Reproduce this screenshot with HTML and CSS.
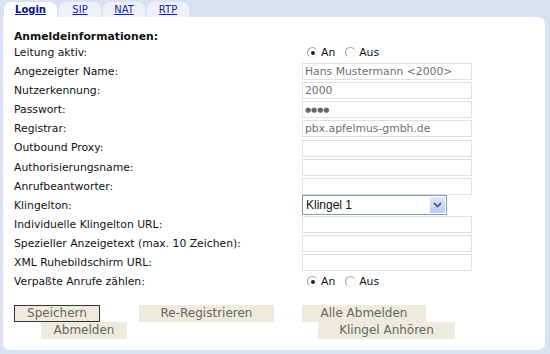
FILE: index.html
```html
<!DOCTYPE html>
<html lang="de">
<head>
<meta charset="utf-8">
<title>Login</title>
<link rel="stylesheet" href="styles.css">
</head>
<body>
<div class="tabs">
  <a class="tab active" href="#">Login</a>
  <a class="tab" href="#">SIP</a>
  <a class="tab" href="#">NAT</a>
  <a class="tab" href="#">RTP</a>
</div>
<div class="panel">
  <div class="heading">Anmeldeinformationen:</div>
  <div class="form">
    <div class="label">Leitung aktiv:</div>
    <div class="field radios"><label><span class="radio on"></span>An</label><label><span class="radio"></span>Aus</label></div>

    <div class="label">Angezeigter Name:</div>
    <div class="field"><input class="text" type="text" value="Hans Mustermann &lt;2000&gt;"></div>

    <div class="label">Nutzerkennung:</div>
    <div class="field"><input class="text" type="text" value="2000"></div>

    <div class="label">Passwort:</div>
    <div class="field"><input class="text pw" type="text" value="●●●●"></div>

    <div class="label">Registrar:</div>
    <div class="field"><input class="text" type="text" value="pbx.apfelmus-gmbh.de"></div>

    <div class="label">Outbound Proxy:</div>
    <div class="field"><input class="text" type="text" value=""></div>

    <div class="label">Authorisierungsname:</div>
    <div class="field"><input class="text" type="text" value=""></div>

    <div class="label">Anrufbeantworter:</div>
    <div class="field"><input class="text" type="text" value=""></div>

    <div class="label">Klingelton:</div>
    <div class="field"><div class="select"><span class="select-value">Klingel 1</span><span class="select-arrow"><svg width="9" height="6" viewBox="0 0 9 6"><path d="M1 1 L4.5 4.5 L8 1" fill="none" stroke="#4d6185" stroke-width="1.8"/></svg></span></div></div>

    <div class="label">Individuelle Klingelton URL:</div>
    <div class="field"><input class="text" type="text" value=""></div>

    <div class="label">Spezieller Anzeigetext (max. 10 Zeichen):</div>
    <div class="field"><input class="text" type="text" value=""></div>

    <div class="label">XML Ruhebildschirm URL:</div>
    <div class="field"><input class="text" type="text" value=""></div>

    <div class="label">Verpaßte Anrufe zählen:</div>
    <div class="field radios"><label><span class="radio on"></span>An</label><label><span class="radio"></span>Aus</label></div>
  </div>
  <div class="buttons">
    <div class="brow">
      <button class="btn b-save">Speichern</button>
      <button class="btn b-rereg">Re-Registrieren</button>
      <button class="btn b-all">Alle Abmelden</button>
    </div>
    <div class="brow">
      <button class="btn b-logout">Abmelden</button>
      <button class="btn b-ring">Klingel Anhören</button>
    </div>
  </div>
</div>
</body>
</html>
```

FILE: styles.css
```css
html, body {
  margin: 0;
  padding: 0;
}
body {
  width: 550px;
  height: 354px;
  background: #dae1f4;
  font-family: "DejaVu Sans", Verdana, sans-serif;
  font-size: 10.8px;
  color: #111;
  overflow: hidden;
}
.tabs {
  display: flex;
  height: 17px;
  padding-left: 4px;
  gap: 2px;
  align-items: flex-end;
}
.tab {
  display: block;
  height: 15px;
  line-height: 15px;
  padding: 0;
  text-align: center;
  background: #eef1f9;
  border-radius: 7px 7px 0 0;
  color: #1d22a8;
  font-size: 10px;
  text-decoration: underline;
  width: 42px;
}
.tab.active {
  background: #fff;
  color: #0c0c7a;
  font-weight: bold;
  width: 53px;
}
.panel {
  margin-left: 3px;
  width: 542px;
  height: 333px;
  background: #fff;
  border-radius: 0 7px 7px 7px;
  box-sizing: border-box;
  padding: 13px 0 0 11px;
}
.heading {
  font-weight: bold;
  height: 14px;
  line-height: 14px;
  font-size: 10.8px;
}
.form {
  display: grid;
  grid-template-columns: 288px 170px;
  grid-auto-rows: 19.1px;
  margin-top: -1px;
}
.label {
  line-height: 19px;
  white-space: nowrap;
}
.field {
  display: flex;
  align-items: center;
}
.text {
  box-sizing: border-box;
  width: 170px;
  height: 17px;
  border: 1px solid #e0e0e0;
  padding: 0 2px;
  margin: 0;
  font-family: "DejaVu Sans", Verdana, sans-serif;
  font-size: 10.8px;
  color: #6e6e6e;
  background: #fff;
  outline: none;
}
.pw {
  font-size: 7px;
  color: #666;
}
.radios {
  padding-left: 5px;
  gap: 10px;
}
.radios label {
  display: flex;
  align-items: center;
  gap: 3px;
}
.radio {
  box-sizing: border-box;
  width: 11px;
  height: 11px;
  border-radius: 50%;
  border: 1px solid #a0a0a0;
  border-right-color: #eee;
  border-bottom-color: #eee;
  background: #fff;
  display: flex;
  align-items: center;
  justify-content: center;
}
.radio.on::after {
  content: "";
  width: 4px;
  height: 4px;
  border-radius: 50%;
  background: #222;
}
.field .select {
  position: relative;
  box-sizing: border-box;
  width: 145px;
  height: 20px;
  border: 1px solid #7f9db9;
  background: #fff;
  display: flex;
  align-items: center;
}
.select-value {
  font-family: "Liberation Sans", Arial, sans-serif;
  font-size: 12px;
  color: #111;
  padding-left: 3px;
}
.select-arrow {
  position: absolute;
  right: 1px;
  top: 1px;
  width: 15px;
  height: 16px;
  background: linear-gradient(#dfe8fb, #b9cbf3);
  border-radius: 1px;
  display: flex;
  align-items: center;
  justify-content: center;
}
.buttons {
  margin-top: 14px;
}
.brow {
  display: flex;
  height: 17px;
}
.btn {
  box-sizing: border-box;
  height: 17px;
  border: none;
  background: #ecebdc;
  color: #666;
  font-family: "DejaVu Sans", Verdana, sans-serif;
  font-size: 12px;
  padding: 0;
  margin: 0;
  line-height: 15px;
}
.b-save {
  width: 86px;
  border: 1px solid #333;
}
.b-rereg {
  width: 135px;
  margin-left: 39px;
}
.b-all {
  width: 124px;
  margin-left: 28px;
}
.b-logout {
  width: 86px;
  margin-left: 27px;
}
.b-ring {
  width: 137px;
  margin-left: 191px;
}
```
